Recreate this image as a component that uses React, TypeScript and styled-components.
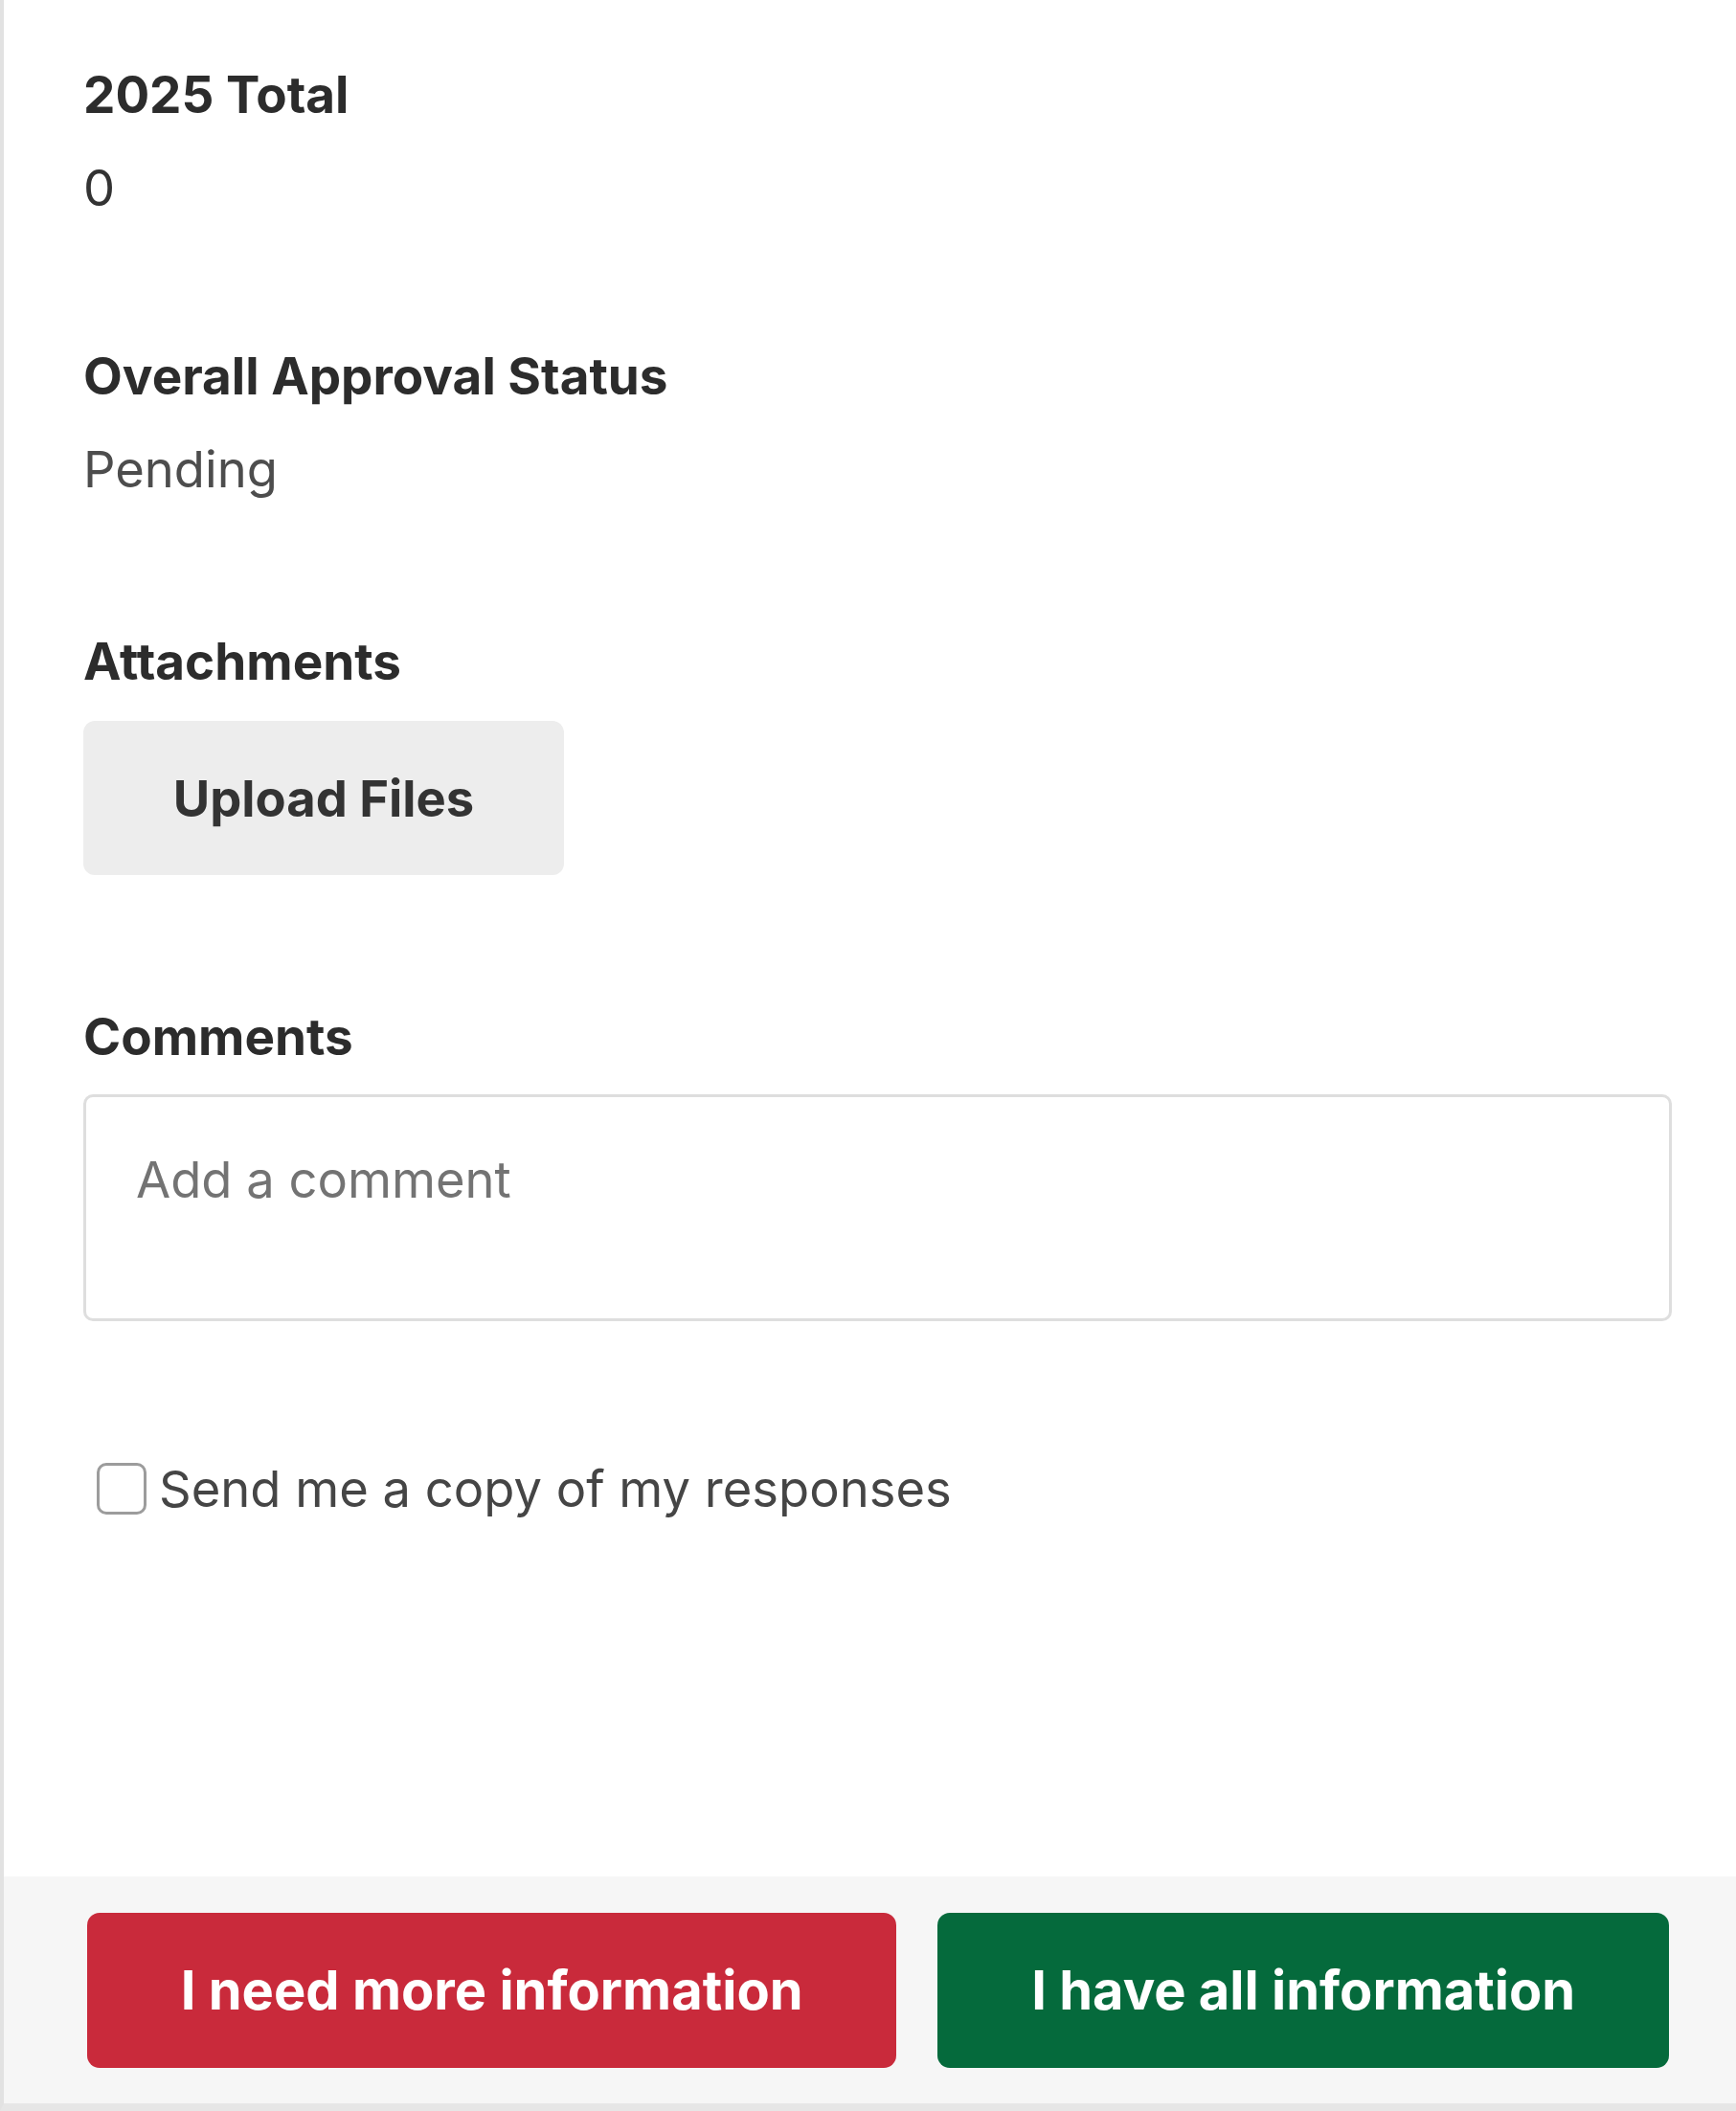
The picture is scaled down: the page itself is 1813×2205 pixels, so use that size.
import * as React from 'react';
import styled, {createGlobalStyle} from 'styled-components';

const GlobalStyle = createGlobalStyle`
  html, body {
    margin: 0;
    padding: 0;
    background: #ffffff;
  }
  body {
    font-family: Inter, "Liberation Sans", Arial, sans-serif;
    -webkit-font-smoothing: antialiased;
  }
`;

const Panel = styled.div`
  display: flex;
  flex-direction: column;
  min-height: 2205px;
  box-sizing: border-box;
  border-left: 4px solid #e2e2e2;
  border-bottom: 8px solid #e6e6e6;
  background: #fff;
`;

const Body = styled.main`
  flex: 1;
  display: flex;
  flex-direction: column;
  padding: 69px 67px 0 83px;
`;

const Field = styled.section<{ $gap?: number }>`
  display: flex;
  flex-direction: column;
  align-items: flex-start;
  margin-bottom: ${props => props.$gap ?? 137}px;
`;

const Label = styled.h3<{ $space?: number }>`
  margin: 0 0 ${props => props.$space ?? 37}px;
  font-size: 53px;
  line-height: 60px;
  font-weight: 700;
  color: #2c2c2c;
`;

const Value = styled.div<{ $muted?: boolean }>`
  font-size: 52.5px;
  line-height: 60px;
  color: ${props => props.$muted ? '#4d4d4d' : '#333'};
`;

const UploadButton = styled.button`
  width: 502px;
  height: 161px;
  border: none;
  border-radius: 12px;
  background: #ededed;
  color: #333;
  font-family: inherit;
  font-size: 52.5px;
  font-weight: 700;
`;

const CommentBox = styled.textarea`
  box-sizing: border-box;
  width: 100%;
  height: 237px;
  padding: 56px 52px 40px;
  border: 3px solid #dedede;
  border-radius: 10px;
  resize: none;
  font-family: inherit;
  font-size: 52.5px;
  line-height: 60px;
  color: #333;
  &::placeholder {
    color: #737373;
  }
`;

const CopyRow = styled.label`
  display: flex;
  align-items: center;
  gap: 13px;
  margin: 145px 0 0 14px;
  font-size: 52.5px;
  line-height: 60px;
  color: #454545;
`;

const Box = styled.span`
  box-sizing: border-box;
  width: 52px;
  height: 54px;
  border: 3px solid #9c9c9c;
  border-radius: 10px;
  background: #fff;
`;

const Footer = styled.footer`
  display: flex;
  gap: 43px;
  padding: 38px 70px 37px 87px;
  background: #f6f6f6;
`;

const ActionButton = styled.button<{ $tone: 'danger' | 'success'; $grow: number }>`
  flex: ${props => props.$grow};
  height: 162px;
  border: none;
  border-radius: 13px;
  background: ${props => props.$tone === 'danger' ? '#c92a3b' : '#056a3c'};
  color: #fff;
  font-family: inherit;
  font-size: 56px;
  font-weight: 700;
`;

const App: React.FC = () => {
  const [sendCopy, setSendCopy] = React.useState(false);

  return (
    <>
      <GlobalStyle/>
      <Panel>
        <Body>
          <Field>
            <Label>2025 Total</Label>
            <Value>0</Value>
          </Field>
          <Field $gap={141}>
            <Label>Overall Approval Status</Label>
            <Value $muted>Pending</Value>
          </Field>
          <Field $gap={139}>
            <Label $space={32}>Attachments</Label>
            <UploadButton>Upload Files</UploadButton>
          </Field>
          <Field $gap={0}>
            <Label $space={30}>Comments</Label>
            <CommentBox placeholder="Add a comment"/>
          </Field>
          <CopyRow onClick={() => setSendCopy(!sendCopy)}>
            <Box/>
            <span>Send me a copy of my responses</span>
          </CopyRow>
        </Body>
        <Footer>
          <ActionButton $tone="danger" $grow={846}>I need more information</ActionButton>
          <ActionButton $tone="success" $grow={763}>I have all information</ActionButton>
        </Footer>
      </Panel>
    </>
  );
};

export default App;
